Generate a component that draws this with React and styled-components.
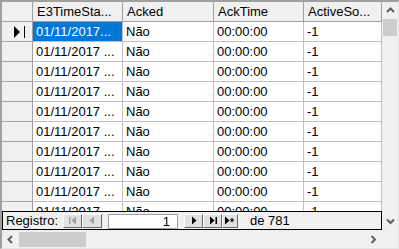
import styled, { createGlobalStyle } from 'styled-components'

const Global = createGlobalStyle`
  html, body {
    margin: 0;
    padding: 0;
    background: #f0f0f0;
  }
  * {
    box-sizing: border-box;
  }
`

const Frame = styled.div`
  width: 399px;
  height: 249px;
  border-top: 2px solid #a0a0a0;
  border-left: 2px solid #a0a0a0;
  border-right: 1px solid #e3e3e3;
  border-bottom: 1px solid #e3e3e3;
  display: grid;
  grid-template-columns: 380px 16px;
  grid-template-rows: 228px 18px;
  font-family: "Liberation Sans", Arial, sans-serif;
  font-size: 13px;
  color: #000;
  background: #f0f0f0;
  overflow: hidden;
`

const Main = styled.div`
  display: flex;
  flex-direction: column;
  min-height: 0;
`

const GridView = styled.div`
  flex: 1;
  overflow: hidden;
  background: #fff;
`

const Row = styled.div`
  display: grid;
  grid-template-columns: 31px 90px 91px 90px 1fr;
  height: 20px;
`

const RowHead = styled.div`
  background: #f0f0f0;
  border-right: 1px solid #a0a0a0;
  border-bottom: 1px solid #a0a0a0;
  display: flex;
  align-items: center;
  padding-left: 11px;
`

const HeadCell = styled.div`
  background: #f0f0f0;
  border-right: 1px solid #a0a0a0;
  border-bottom: 1px solid #a0a0a0;
  padding-left: 4px;
  line-height: 19px;
  white-space: nowrap;
  overflow: hidden;
`

const Cell = styled.div`
  background: ${p => (p.$selected ? '#0078d7' : '#fff')};
  color: ${p => (p.$selected ? '#fff' : '#000')};
  border-right: 1px solid #c0c0c0;
  border-bottom: 1px solid #c0c0c0;
  padding-left: 3px;
  line-height: 19px;
  white-space: nowrap;
  overflow: hidden;
`

const NavBar = styled.div`
  height: 19px;
  flex: none;
  border: 1px solid #000;
  background: #f0f0f0;
  display: flex;
  align-items: center;
  padding-left: 3px;
`

const NavLabel = styled.span`
  margin-right: 5px;
  line-height: 17px;
`

const NavButton = styled.div`
  width: ${p => p.$w || 19}px;
  height: 14px;
  background: #e1e1e1;
  border-top: 1px solid #fff;
  border-left: 1px solid #fff;
  border-right: 1px solid #696969;
  border-bottom: 1px solid #696969;
  display: flex;
  align-items: center;
  justify-content: center;
  color: ${p => (p.$disabled ? '#a0a0a0' : '#000')};
`

const RecordInput = styled.div`
  width: 70px;
  height: 15px;
  margin: 1px 6px 0;
  background: #fff;
  border: 1px solid #a0a0a0;
  text-align: right;
  padding-right: 7px;
  line-height: 13px;
`

const TotalText = styled.span`
  margin-left: 12px;
  line-height: 17px;
`

const VScroll = styled.div`
  display: flex;
  flex-direction: column;
  align-items: center;
  background: #f0f0f0;
`

const HScroll = styled.div`
  display: flex;
  align-items: center;
  background: #f0f0f0;
`

const ArrowBox = styled.div`
  width: ${p => (p.$vertical ? '16px' : '17px')};
  height: ${p => (p.$vertical ? '17px' : '18px')};
  flex: none;
  display: flex;
  align-items: center;
  justify-content: center;
`

const Thumb = styled.div`
  background: #cdcdcd;
  flex: none;
  width: ${p => p.$w}px;
  height: ${p => p.$h}px;
`

const Spacer = styled.div`
  flex: 1;
`

const Corner = styled.div`
  background: #f0f0f0;
`

const Chevron = ({ dir }) => {
  const pts = {
    up: '1,6 4.5,2.5 8,6',
    down: '1,2.5 4.5,6 8,2.5',
    left: '6,1 2.5,4.5 6,8',
    right: '2.5,1 6,4.5 2.5,8',
  }[dir]
  return (
    <svg width="9" height="9" viewBox="0 0 9 9">
      <polyline points={pts} fill="none" stroke="#606060" strokeWidth="2" />
    </svg>
  )
}

const NavIcon = ({ kind }) => (
  <svg width="12" height="9" viewBox="0 0 12 9" fill="currentColor">
    {kind === 'first' && (
      <>
        <rect x="2" y="1" width="1.5" height="7" />
        <polygon points="9,0.5 9,8.5 4.5,4.5" />
      </>
    )}
    {kind === 'prev' && <polygon points="8,0.5 8,8.5 3.5,4.5" />}
    {kind === 'next' && <polygon points="4,0.5 4,8.5 8.5,4.5" />}
    {kind === 'last' && (
      <>
        <polygon points="3,0.5 3,8.5 7.5,4.5" />
        <rect x="8.5" y="1" width="1.5" height="7" />
      </>
    )}
    {kind === 'new' && (
      <>
        <polygon points="1,0.5 1,8.5 5.5,4.5" />
        <text x="6" y="10" fontSize="10" fontFamily="Liberation Sans, Arial, sans-serif" fontWeight="bold">*</text>
      </>
    )}
  </svg>
)

const RowPointer = () => (
  <svg width="13" height="12" viewBox="0 0 13 12">
    <polygon points="1,0 1,12 7,6" fill="#000" />
    <rect x="11" y="0" width="1" height="12" fill="#000" />
  </svg>
)

const columns = ['E3TimeSta...', 'Acked', 'AckTime', 'ActiveSo...']
const rows = Array.from({ length: 10 }, (_, i) => ({
  stamp: i === 0 ? '01/11/2017...' : '01/11/2017 ...',
  acked: 'Não',
  ackTime: '00:00:00',
  active: '-1',
}))

export default function App() {
  return (
    <>
      <Global />
      <Frame>
        <Main>
          <GridView>
            <Row>
              <RowHead />
              {columns.map(c => (
                <HeadCell key={c}>{c}</HeadCell>
              ))}
            </Row>
            {rows.map((r, i) => (
              <Row key={i}>
                <RowHead>{i === 0 && <RowPointer />}</RowHead>
                <Cell $selected={i === 0}>{r.stamp}</Cell>
                <Cell>{r.acked}</Cell>
                <Cell>{r.ackTime}</Cell>
                <Cell>{r.active}</Cell>
              </Row>
            ))}
          </GridView>
          <NavBar>
            <NavLabel>Registro:</NavLabel>
            <NavButton $disabled><NavIcon kind="first" /></NavButton>
            <NavButton $disabled $w={20}><NavIcon kind="prev" /></NavButton>
            <RecordInput>1</RecordInput>
            <NavButton><NavIcon kind="next" /></NavButton>
            <NavButton><NavIcon kind="last" /></NavButton>
            <NavButton $w={16}><NavIcon kind="new" /></NavButton>
            <TotalText>de 781</TotalText>
          </NavBar>
        </Main>
        <VScroll>
          <ArrowBox $vertical><Chevron dir="up" /></ArrowBox>
          <Thumb $w={14} $h={17} />
          <Spacer />
          <ArrowBox $vertical><Chevron dir="down" /></ArrowBox>
        </VScroll>
        <HScroll>
          <ArrowBox><Chevron dir="left" /></ArrowBox>
          <Thumb $w={67} $h={15} />
          <Spacer />
          <ArrowBox><Chevron dir="right" /></ArrowBox>
        </HScroll>
        <Corner />
      </Frame>
    </>
  )
}
